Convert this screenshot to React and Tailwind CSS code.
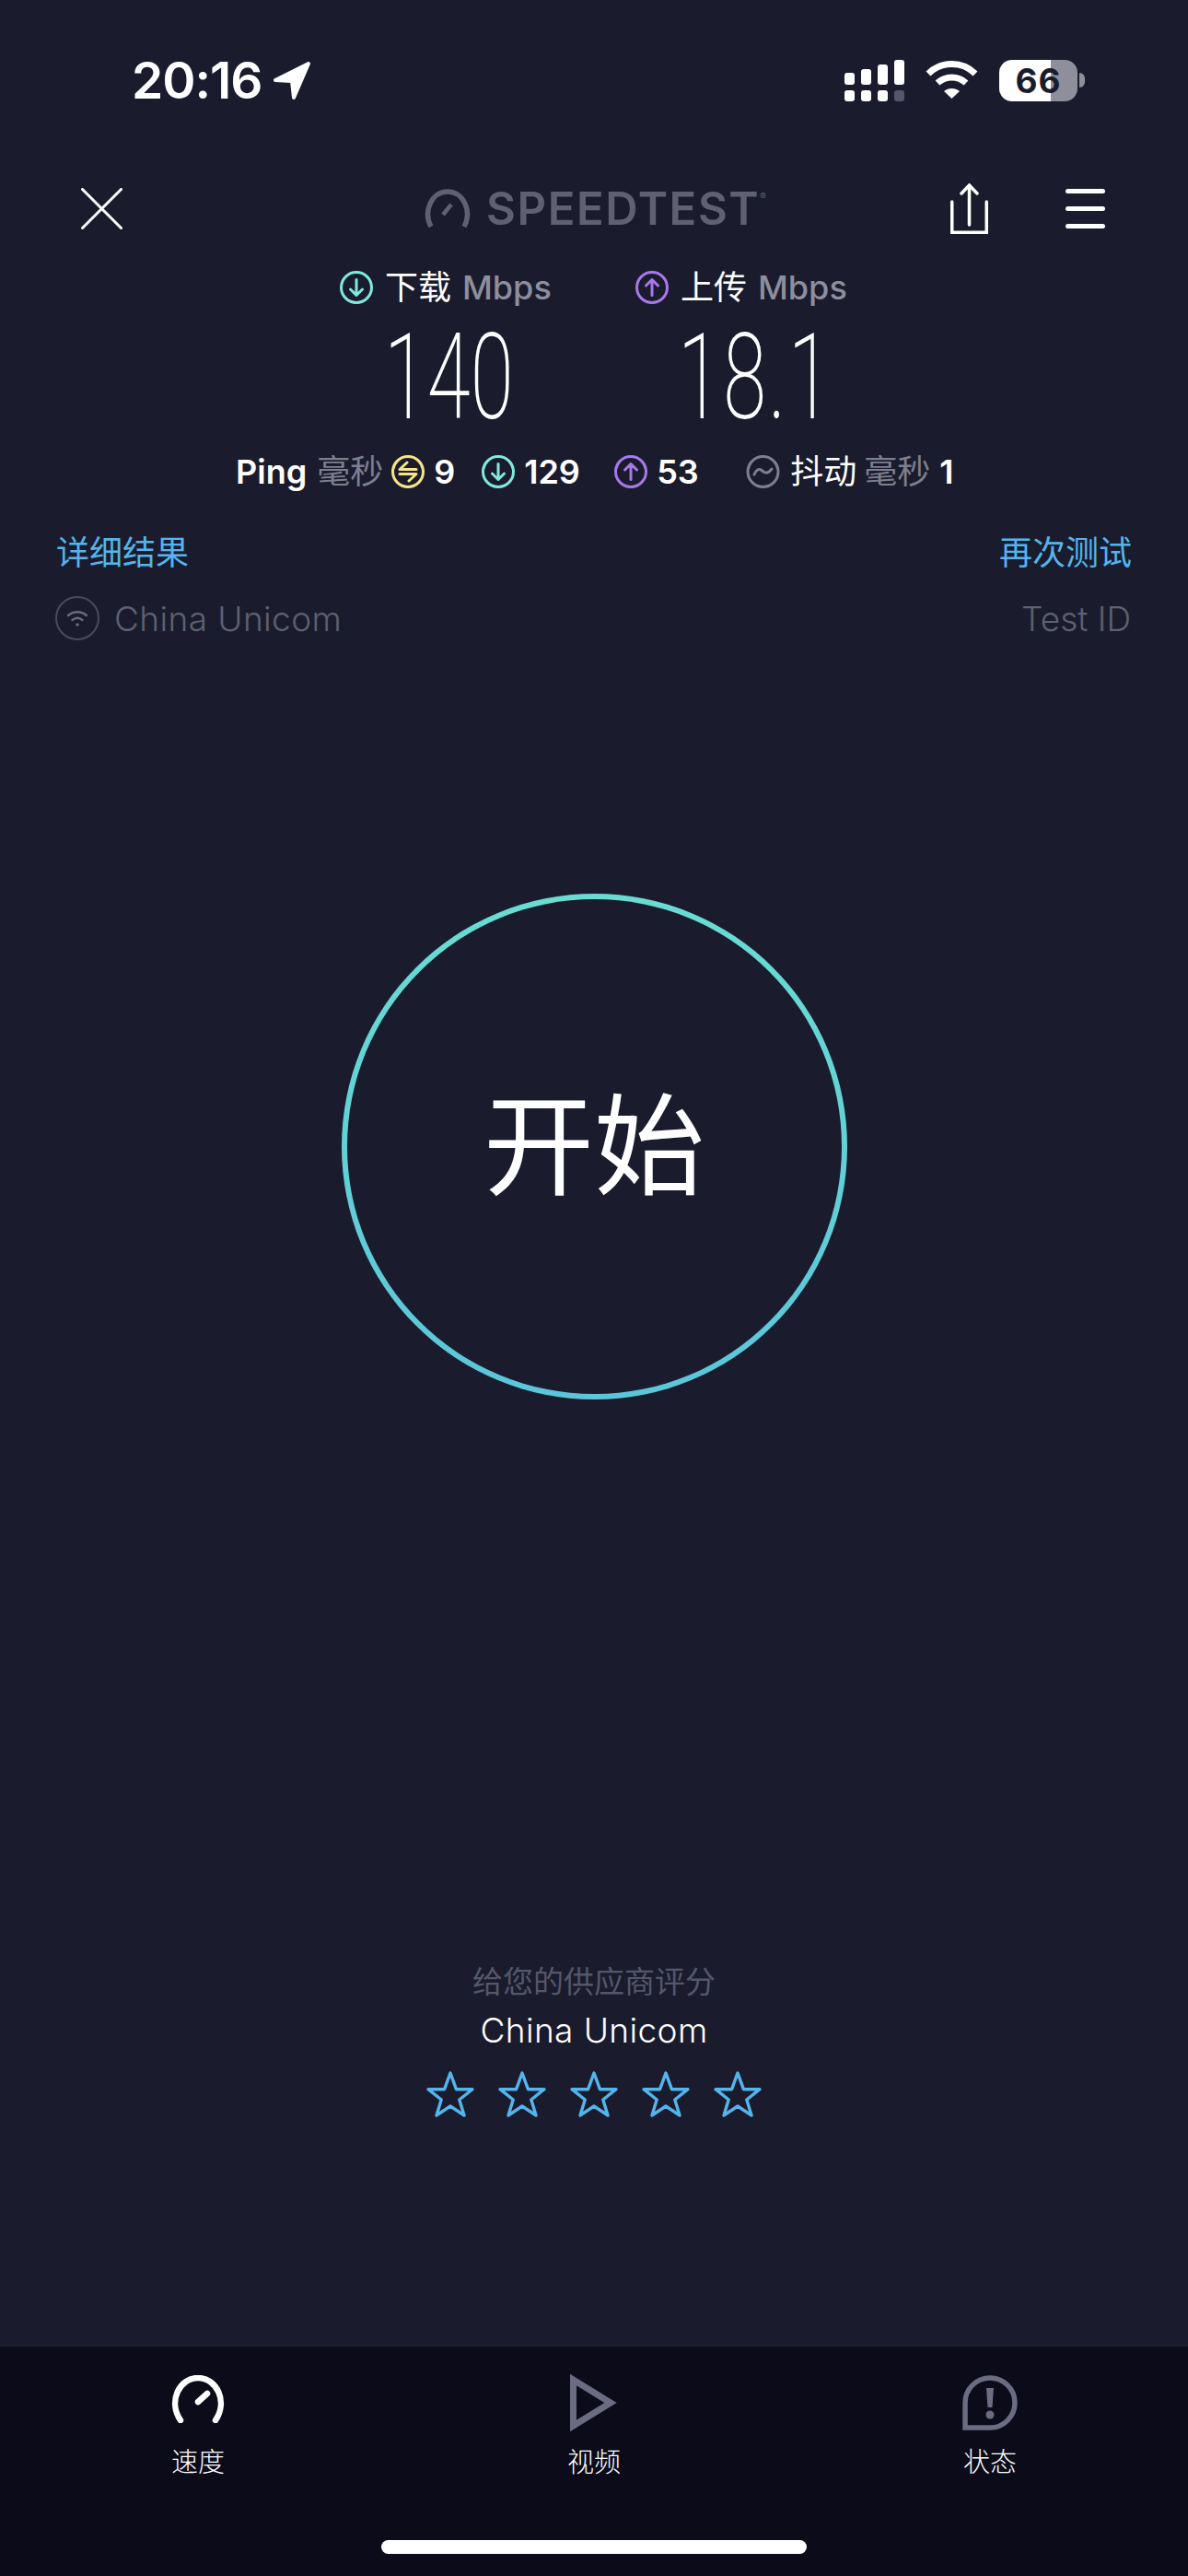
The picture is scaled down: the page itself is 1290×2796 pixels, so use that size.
const sans = "font-['Inter','Noto_Sans_CJK_SC',sans-serif]";

function CircleArrow({ color, up }) {
  return (
    <svg width="36" height="36" viewBox="0 0 36 36" fill="none" stroke={color} strokeWidth="3" strokeLinecap="round" strokeLinejoin="round" className="shrink-0">
      <circle cx="18" cy="18" r="16.5" />
      {up ? <path d="M18 26.500V9.500M11.500 16L18 9.500l6.500 6.500" /> : <path d="M18 9.500v17M11.500 20L18 26.500l6.500-6.500" />}
    </svg>
  );
}

function PingIcon() {
  return (
    <svg width="38" height="36" viewBox="0 0 38 36" fill="none" stroke="#f5e585" strokeWidth="3" strokeLinecap="round" strokeLinejoin="round" className="shrink-0">
      <circle cx="19" cy="18" r="16.500" />
      <path d="M28 15.500H10l8-7.500M10 20.500h18l-8 7.500" />
    </svg>
  );
}

function JitterIcon() {
  return (
    <svg width="37" height="36" viewBox="0 0 37 36" fill="none" stroke="#7d7e8e" strokeWidth="3" strokeLinecap="round" className="shrink-0">
      <circle cx="18.500" cy="18" r="16.500" />
      <path d="M9 21c2-5 5-7 8-4.500s6 5 11-1.500" />
    </svg>
  );
}

function Star() {
  return (
    <svg width="52" height="50" viewBox="0 0 52 50" fill="none" stroke="#54b4ec" strokeWidth="3.400" strokeLinejoin="round">
      <path d="M26 2l6.400 17.700H50L35.800 31l5.200 17L26 38l-15 10 5.200-17L2 19.700h17.600z" />
    </svg>
  );
}

function StatusBar() {
  return (
    <div className="h-[174px] flex items-center pl-[143px] pr-[112px]">
      <span className="text-[55px] leading-none font-semibold text-white tracking-[-1px]">20:16</span>
      <svg width="42" height="43" viewBox="0 0 42 43" fill="#fff" stroke="#fff" strokeWidth="4" strokeLinejoin="round" className="ml-[11px]">
        <path d="M39 3L3 21l18 1 2 18z" />
      </svg>
      <div className="flex-1" />
      <svg width="65" height="45" viewBox="0 0 65 45" fill="#fff">
        <rect x="0" y="14" width="11" height="13" rx="3" />
        <rect x="18" y="10" width="11" height="17" rx="3" />
        <rect x="36" y="5" width="11" height="22" rx="3" />
        <rect x="54" y="0" width="11" height="27" rx="3" />
        <rect x="0" y="33" width="11" height="12" rx="3" />
        <rect x="18" y="33" width="11" height="12" rx="3" />
        <rect x="36" y="33" width="11" height="12" rx="3" />
        <rect x="54" y="33" width="11" height="12" rx="3" fill="#55566a" />
      </svg>
      <svg width="57" height="42" viewBox="0 0 57 42" fill="none" stroke="#fff" strokeWidth="7" className="ml-[23px]">
        <path d="M3 14C17 0 40 0 54 14" />
        <path d="M13 24c9-8 22-8 31 0" />
        <path d="M20 33l8.500 8 8.500-8c-5-4-12-4-17 0z" fill="#fff" stroke="none" />
      </svg>
      <div className="ml-[23px] w-[85px] h-[45px] rounded-[14px] bg-[linear-gradient(90deg,#ffffff_66%,#8f8f9c_66%)] flex items-center justify-center text-[#1a1c2d] text-[37px] leading-none font-bold tracking-[1px]">
        66
      </div>
      <div className="ml-[2px] w-[6px] h-[16px] rounded-r-full bg-[#8f8f9c]" />
    </div>
  );
}

function NavBar() {
  return (
    <div className="h-[104px] flex items-center pl-[88px] pr-[90px]">
      <svg width="45" height="45" viewBox="0 0 45 45" fill="none" stroke="#fff" strokeWidth="3" strokeLinecap="round">
        <path d="M1.500 1.500l42 42M43.500 1.500l-42 42" />
      </svg>
      <div className="ml-[328px] flex items-center text-[#5f6070]">
        <svg width="50" height="42" viewBox="0 0 50 42" fill="none" stroke="#5f6070" strokeWidth="5.500" className="shrink-0">
          <path d="M7 41C-2 24 8 3 25 3s27 21 18 38" />
          <path d="M20 28l9-11" strokeWidth="4.500" />
        </svg>
        <span className="ml-[17px] text-[49px] leading-none font-semibold tracking-[1.6px]">SPEEDTEST</span>
        <span className="text-[10px] leading-none self-start mt-[6px]">®</span>
      </div>
      <div className="flex-1" />
      <svg width="41" height="55" viewBox="0 0 41 55" fill="none" stroke="#fff" strokeWidth="3.500" strokeLinecap="round">
        <path d="M1.750 20v33.250h37.500V20" />
        <path d="M20.500 45V2M12 11l8.500-9 8.500 9" />
      </svg>
      <div className="ml-[84px] w-[43px] flex flex-col gap-[14px]">
        <div className="h-[5px] rounded-full bg-white" />
        <div className="h-[5px] rounded-full bg-white" />
        <div className="h-[5px] rounded-full bg-white" />
      </div>
    </div>
  );
}

function SpeedLabel({ label, color, up }) {
  return (
    <div className="w-[321px] flex items-center">
      <CircleArrow color={color} up={up} />
      <span className="ml-[13px] text-[36px] leading-none text-white">{label}</span>
      <span className="ml-[12px] text-[36px] leading-none font-medium text-[#8d8e9e]">Mbps</span>
    </div>
  );
}

function Results() {
  const valueClass = "origin-left scale-x-[0.66] w-max text-[129px] leading-none font-extralight text-white font-['Roboto']";
  return (
    <div>
      <div className="h-[68px] pl-[369px] flex items-center">
        <SpeedLabel label="下载" color="#7fe9dc" />
        <SpeedLabel label="上传" color="#a778ea" up />
      </div>
      <div className="h-[126px] pl-[417px] flex items-center">
        <div className="w-[319px]">
          <div className={valueClass}>140</div>
        </div>
        <div>
          <div className={`${valueClass} tracking-[3.500px]`}>18.1</div>
        </div>
      </div>
      <div className="h-[80px] pl-[256px] flex items-center text-[36px] leading-none font-semibold text-white">
        <span>Ping</span>
        <span className="ml-[11px] font-normal text-[#7d7e8e]">毫秒</span>
        <span className="ml-[8px]"><PingIcon /></span>
        <span className="ml-[9px] w-[52px]">9</span>
        <CircleArrow color="#7fe9dc" />
        <span className="ml-[10px] w-[98px]">129</span>
        <CircleArrow color="#a778ea" up />
        <span className="ml-[10px] w-[97px]">53</span>
        <JitterIcon />
        <span className="ml-[11px] font-normal">抖动</span>
        <span className="ml-[8px] font-normal text-[#7d7e8e]">毫秒</span>
        <span className="ml-[10px]">1</span>
      </div>
      <div className="mt-[20px] h-[56px] px-[61px] flex items-center justify-between text-[36px] leading-none text-[#54b4ec]">
        <span>详细结果</span>
        <span>再次测试</span>
      </div>
      <div className="mt-[19px] h-[48px] pl-[60px] pr-[62px] flex items-center text-[37px] leading-none font-light tracking-[0.4px] text-[#5f6070]">
        <div className="w-[48px] h-[48px] rounded-full border-2 border-[#4a4b5c] flex items-center justify-center">
          <svg width="24" height="20" viewBox="0 0 24 20" fill="none" stroke="#6a6b7b" strokeWidth="2.400" strokeLinecap="round">
            <path d="M2 7c6-5 14-5 20 0" />
            <path d="M6.500 12c3.500-3 7.500-3 11 0" />
            <circle cx="12" cy="17" r="1.800" fill="#6a6b7b" stroke="none" />
          </svg>
        </div>
        <span className="ml-[16px]">China Unicom</span>
        <div className="flex-1" />
        <span className="tracking-normal">Test ID</span>
      </div>
    </div>
  );
}

function RateProvider() {
  return (
    <div className="flex flex-col items-center">
      <div className="h-[40px] flex items-center text-[33px] leading-none text-[#55566a]">给您的供应商评分</div>
      <div className="mt-[12px] h-[40px] flex items-center text-[37px] leading-none font-light tracking-[0.4px] text-white">China Unicom</div>
      <div className="mt-[25px] flex gap-[26px]">
        <Star />
        <Star />
        <Star />
        <Star />
        <Star />
      </div>
    </div>
  );
}

function Tab({ label, children }) {
  return (
    <div className="w-[120px] flex flex-col items-center">
      <div className="h-[60px] flex items-center justify-center">{children}</div>
      <div className="mt-[20px] text-[29px] leading-none font-light text-white">{label}</div>
    </div>
  );
}

function TabBar() {
  return (
    <div className="h-[249px] bg-[#0b0b1a] flex flex-col">
      <div className="pt-[31px] pl-[155px] pr-[155px] flex justify-between">
        <Tab label="速度">
          <svg width="60" height="52" viewBox="0 0 60 52" fill="none" stroke="#fff" strokeWidth="6.500" strokeLinecap="round" className="mb-[8px]">
            <path d="M11 49C-3 28 10 3 30 3s33 25 19 46" />
            <path d="M30 29l10-9" />
          </svg>
        </Tab>
        <Tab label="视频">
          <svg width="52" height="62" viewBox="0 0 52 62" fill="none" stroke="#6b6b82" strokeWidth="7" strokeLinejoin="miter">
            <path d="M3.500 6v50L44 31z" />
          </svg>
        </Tab>
        <Tab label="状态">
          <svg width="60" height="60" viewBox="0 0 60 60" fill="none" stroke="#6b6b82" strokeWidth="5.500">
            <path d="M3 57V30a27 27 0 1 1 27 27z" />
            <path d="M26 14h8l-1.500 21h-5z" fill="#6b6b82" stroke="none" />
            <circle cx="30" cy="43" r="4.500" fill="#6b6b82" stroke="none" />
          </svg>
        </Tab>
      </div>
      <div className="flex-1 flex items-end justify-center pb-[24px]">
        <div className="w-[462px] h-[15px] rounded-full bg-white" />
      </div>
    </div>
  );
}

export default function App() {
  return (
    <div className={`w-[1290px] h-[2796px] bg-[#1a1c2d] flex flex-col overflow-hidden ${sans}`}>
      <StatusBar />
      <NavBar />
      <Results />
      <div className="mt-[275px] flex justify-center">
        <div className="w-[549px] h-[549px] rounded-full p-[6px] bg-[linear-gradient(180deg,#69dcd2,#5bc5da)]">
          <div className="w-full h-full rounded-full bg-[#1a1c2d] flex items-center justify-center text-[120px] leading-none text-white">
            开始
          </div>
        </div>
      </div>
      <div className="mt-[612px]">
        <RateProvider />
      </div>
      <div className="flex-1" />
      <TabBar />
    </div>
  );
}
